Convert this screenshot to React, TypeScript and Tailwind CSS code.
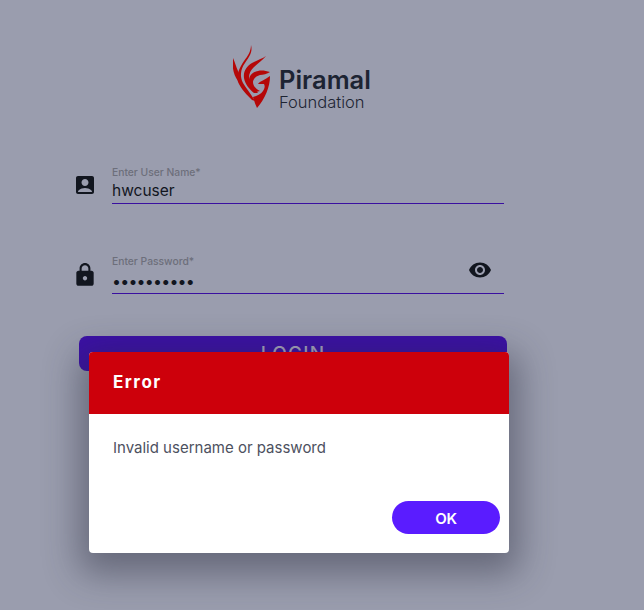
import { MdAccountBox, MdLock, MdVisibility } from "react-icons/md";

const Logo = () => (
  <div className="flex items-end h-[64px] pl-[233px]">
    <svg width="39" height="64" viewBox="0 0 39 64" className="mr-[7px]">
      <g fill="#b50808">
        <path d="M0 13 C-1 21 0 29 5 36 C7 33 7 30 5 26 C3 22 2 17 0 13Z" />
        <path d="M18 0 C20 7 16 12 12 18 C7 25 7 32 10 38 C13 43 18 49 22 56 L19 55 C14 50 8 44 5 37 C3 29 7 22 11 16 C15 11 18 6 18 0Z" />
        <path d="M33 11 C30 15 25 18 21 22 C16 27 15 32 17 37 C19 41 22 44 25 48 L21 48 C16 44 12 39 11 33 C10 26 14 21 19 18 C24 15 29 14 33 11Z" />
        <path d="M37 27 C34 29 30 30 27 30 C23 31 20 34 20 37 C20 41 23 44 27 46 L23 47 C19 45 16 41 16 36 C16 30 20 27 25 26 C29 25 33 26 37 27Z" />
        <path d="M37 31 C37 42 32 54 24 63 C22 59 21 55 20 52 C24 51 28 49 30 46 C32 43 32 41 31 39 L25 39 C27 36 32 35 37 31Z" />
      </g>
    </svg>
    <div className="flex flex-col w-[100px] -mb-[1px]">
      <span className="text-[25.5px] leading-[28px] font-semibold text-[#1d2433] font-['Inter',sans-serif]">Piramal</span>
      <span className="text-[16.5px] leading-[16px] font-light text-[#1d2433] font-['Inter',sans-serif]">Foundation</span>
    </div>
  </div>
);

export default function App() {
  return (
    <div className="relative w-[644px] h-[610px] overflow-hidden bg-[#9a9dae] font-['Inter',sans-serif]">
      <div className="pt-[45px]">
        <Logo />
      </div>

      <div className="flex flex-col pl-[73px] w-[504px] mt-[56px]">
        <div className="flex">
          <MdAccountBox className="w-[24px] h-[24px] text-[#12161f] mt-[8px] mr-[15px]" />
          <div className="flex-1 border-b border-[#3a10a0] h-[39px] pt-[1px]">
            <div className="text-[10.3px] leading-[12px] font-medium text-[#6d6f7b]">Enter User Name*</div>
            <div className="text-[15.5px] leading-[20px] mt-[3px] text-[#12161f]">hwcuser</div>
          </div>
        </div>

        <div className="flex mt-[51px]">
          <MdLock className="w-[26px] h-[26px] text-[#12161f] -ml-[1px] mt-[7px] mr-[14px]" />
          <div className="flex-1 border-b border-[#3a10a0] h-[39px] flex items-start">
            <div className="flex-1">
              <div className="text-[10.3px] leading-[12px] font-medium text-[#6d6f7b]">Enter Password*</div>
              <div className="text-[16px] leading-[20px] mt-[4px] tracking-[-0.8px] text-[#12161f]">••••••••••</div>
            </div>
            <MdVisibility className="w-[24px] h-[24px] text-[#12161f] mt-[3px] mr-[12px]" />
          </div>
        </div>

        <div className="mt-[42px] ml-[6px] w-[428px] h-[35px] rounded-[8px] bg-[#3b10a6] flex justify-center pt-[6px]">
          <span className="text-[19px] leading-[23px] font-medium tracking-[1.2px] text-[#a9a6bf]">LOGIN</span>
        </div>
      </div>

      <div className="absolute left-[89px] top-[352px] w-[420px] h-[201px] rounded-[4px] bg-white overflow-hidden flex flex-col shadow-[0_11px_35px_10px_rgba(40,42,60,0.45)]">
        <div className="h-[62px] bg-[#cd000b] flex items-center pl-[24px]">
          <span className="text-[17px] font-bold tracking-[1.5px] text-white">Error</span>
        </div>
        <div className="pl-[24px] pt-[23px] text-[15px] leading-[22px] text-[#4d5160]">Invalid username or password</div>
        <div className="mt-auto flex justify-end pr-[9px] pb-[19px]">
          <div className="w-[108px] h-[33px] rounded-full bg-[#5a1cff] flex items-center justify-center pt-[3px] text-[15px] font-semibold tracking-[-0.3px] text-white">OK</div>
        </div>
      </div>
    </div>
  );
}
